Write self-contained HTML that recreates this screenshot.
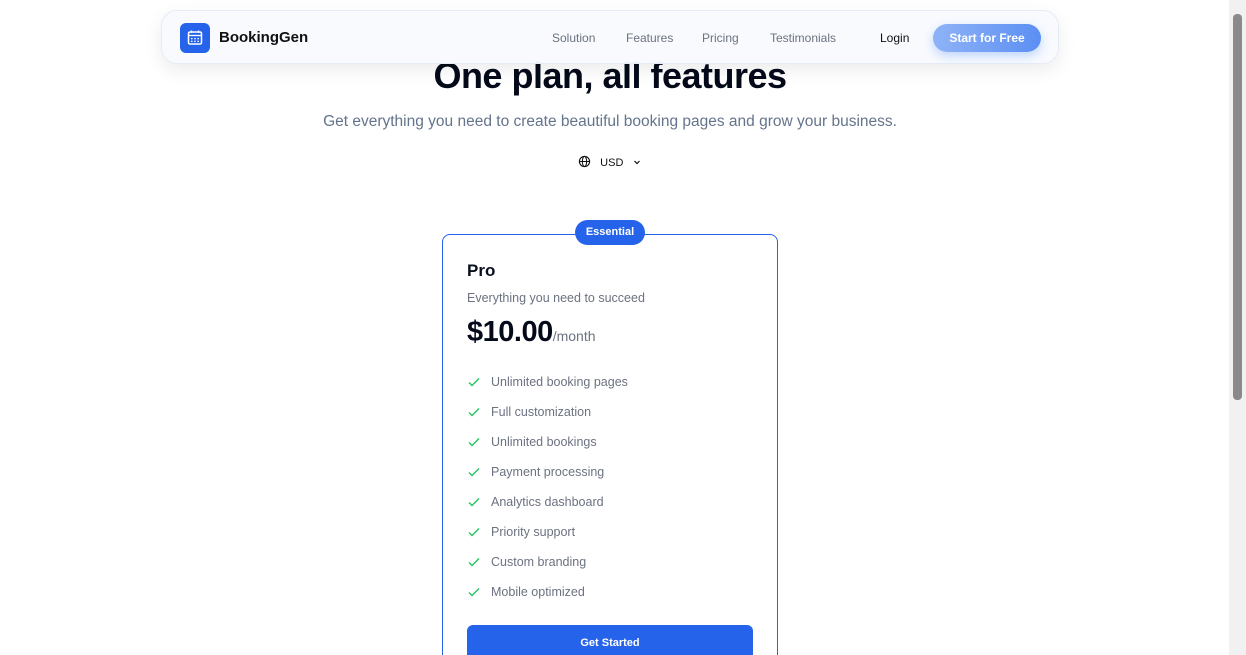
<!DOCTYPE html>
<html style="width:1246px;height:655px;overflow:hidden"><head><style>
*{margin:0;padding:0;box-sizing:border-box}
body{width:1246px;height:655px;overflow:hidden;background:#fff;font-family:"Liberation Sans",sans-serif;position:relative}
.nav{position:absolute;left:161px;top:10px;width:898px;height:54px;border-radius:16px;background:rgba(248,250,254,0.96);border:1px solid #e6ecf5;box-shadow:0 6px 18px rgba(0,0,0,0.08);z-index:2}
.logo{position:absolute;left:18px;top:12px;width:30px;height:30px;border-radius:6px;background:#2563eb}
.brand{position:absolute;left:57px;top:18px;font-size:15px;font-weight:bold;color:#111}
.nl{position:absolute;top:20px;font-size:12px;color:#6b7280}
.btn{position:absolute;left:771px;top:13px;width:108px;height:28px;border-radius:14px;background:linear-gradient(90deg,#8fb3f7,#5b8ff3);color:#fff;font-size:12px;font-weight:bold;text-align:center;line-height:28px;box-shadow:0 4px 10px rgba(59,130,246,0.3)}
h1{position:absolute;left:0;width:1220px;top:55px;text-align:center;font-size:36px;font-weight:bold;color:#050a1a;letter-spacing:-0.5px}
.sub{position:absolute;left:0;width:1220px;top:113px;text-align:center;font-size:15.5px;color:#64748b}
.usd{position:absolute;left:578px;top:155px;font-size:11px;color:#111}
.card{position:absolute;left:442px;top:234px;width:336px;height:450px;border:1px solid #2563eb;border-radius:8px}
.badge{position:absolute;left:575px;top:220px;width:70px;height:25px;border-radius:13px;background:#2563eb;color:#fff;font-size:11px;font-weight:bold;text-align:center;line-height:25px}
.f{position:absolute;left:48px;font-size:12.5px;color:#6b7280}
.f svg{position:absolute;left:-24px;top:0px}
</style></head><body>
<div class="nav">
<div class="logo"><svg width="30" height="30" viewBox="0 0 30 30"><rect x="8.5" y="9" width="13" height="12" rx="1.5" fill="none" stroke="#fff" stroke-width="1.5"/><line x1="8.5" y1="12.5" x2="21.5" y2="12.5" stroke="#fff" stroke-width="1.3"/><line x1="11.5" y1="7.5" x2="11.5" y2="10" stroke="#fff" stroke-width="1.3"/><line x1="18.5" y1="7.5" x2="18.5" y2="10" stroke="#fff" stroke-width="1.3"/><g fill="#fff"><rect x="11" y="15" width="1.5" height="1.3"/><rect x="14.2" y="15" width="1.5" height="1.3"/><rect x="17.4" y="15" width="1.5" height="1.3"/><rect x="11" y="17.7" width="1.5" height="1.3"/><rect x="14.2" y="17.7" width="1.5" height="1.3"/><rect x="17.4" y="17.7" width="1.5" height="1.3"/></g></svg></div>
<div class="brand">BookingGen</div>
<div class="nl" style="left:390px">Solution</div>
<div class="nl" style="left:464px">Features</div>
<div class="nl" style="left:540px">Pricing</div>
<div class="nl" style="left:608px">Testimonials</div>
<div class="nl" style="left:718px;color:#111">Login</div>
<div class="btn">Start for Free</div>
</div>
<h1>One plan, all features</h1>
<div class="sub">Get everything you need to create beautiful booking pages and grow your business.</div>
<div class="usd"><svg width="13" height="13" viewBox="0 0 14 14" style="vertical-align:-2px"><circle cx="7" cy="7" r="5.5" fill="none" stroke="#111" stroke-width="1.2"/><ellipse cx="7" cy="7" rx="2.3" ry="5.5" fill="none" stroke="#111" stroke-width="1.1"/><line x1="1.5" y1="7" x2="12.5" y2="7" stroke="#111" stroke-width="1.1"/></svg>&nbsp;&nbsp; USD &nbsp;&nbsp;<svg width="8" height="8" viewBox="0 0 8 8"><path d="M1.5 3l2.5 2.5L6.5 3" fill="none" stroke="#111" stroke-width="1.2"/></svg></div>
<div class="card">
<div style="position:absolute;left:24px;top:26px;font-size:17px;font-weight:bold;color:#0a0f1e">Pro</div>
<div style="position:absolute;left:24px;top:56px;font-size:12.5px;color:#6b7280">Everything you need to succeed</div>
<div style="position:absolute;left:24px;top:81px;font-size:29px;font-weight:bold;color:#050a1a;letter-spacing:-0.5px">$10.00<span style="font-size:14px;font-weight:normal;color:#6b7280;letter-spacing:0">/month</span></div>
<div class="f" style="top:140px"><svg width="14" height="14" viewBox="0 0 14 14"><path d="M2 7.5l3 3 7-7" fill="none" stroke="#22c55e" stroke-width="1.4"/></svg>Unlimited booking pages</div>
<div class="f" style="top:170px"><svg width="14" height="14" viewBox="0 0 14 14"><path d="M2 7.5l3 3 7-7" fill="none" stroke="#22c55e" stroke-width="1.4"/></svg>Full customization</div>
<div class="f" style="top:200px"><svg width="14" height="14" viewBox="0 0 14 14"><path d="M2 7.5l3 3 7-7" fill="none" stroke="#22c55e" stroke-width="1.4"/></svg>Unlimited bookings</div>
<div class="f" style="top:230px"><svg width="14" height="14" viewBox="0 0 14 14"><path d="M2 7.5l3 3 7-7" fill="none" stroke="#22c55e" stroke-width="1.4"/></svg>Payment processing</div>
<div class="f" style="top:260px"><svg width="14" height="14" viewBox="0 0 14 14"><path d="M2 7.5l3 3 7-7" fill="none" stroke="#22c55e" stroke-width="1.4"/></svg>Analytics dashboard</div>
<div class="f" style="top:290px"><svg width="14" height="14" viewBox="0 0 14 14"><path d="M2 7.5l3 3 7-7" fill="none" stroke="#22c55e" stroke-width="1.4"/></svg>Priority support</div>
<div class="f" style="top:320px"><svg width="14" height="14" viewBox="0 0 14 14"><path d="M2 7.5l3 3 7-7" fill="none" stroke="#22c55e" stroke-width="1.4"/></svg>Custom branding</div>
<div class="f" style="top:350px"><svg width="14" height="14" viewBox="0 0 14 14"><path d="M2 7.5l3 3 7-7" fill="none" stroke="#22c55e" stroke-width="1.4"/></svg>Mobile optimized</div>
<div style="position:absolute;left:24px;top:390px;width:286px;height:38px;border-radius:6px;background:#2563eb;color:#fff;font-size:11px;font-weight:bold;text-align:center;line-height:36px">Get Started</div>
</div>
<div class="badge">Essential</div>
<div style="position:absolute;right:0;top:0;width:17px;height:655px;background:#f1f1f1"></div>
<div style="position:absolute;right:4px;top:14px;width:9px;height:386px;border-radius:4px;background:#8a8a8a"></div>
</body></html>
